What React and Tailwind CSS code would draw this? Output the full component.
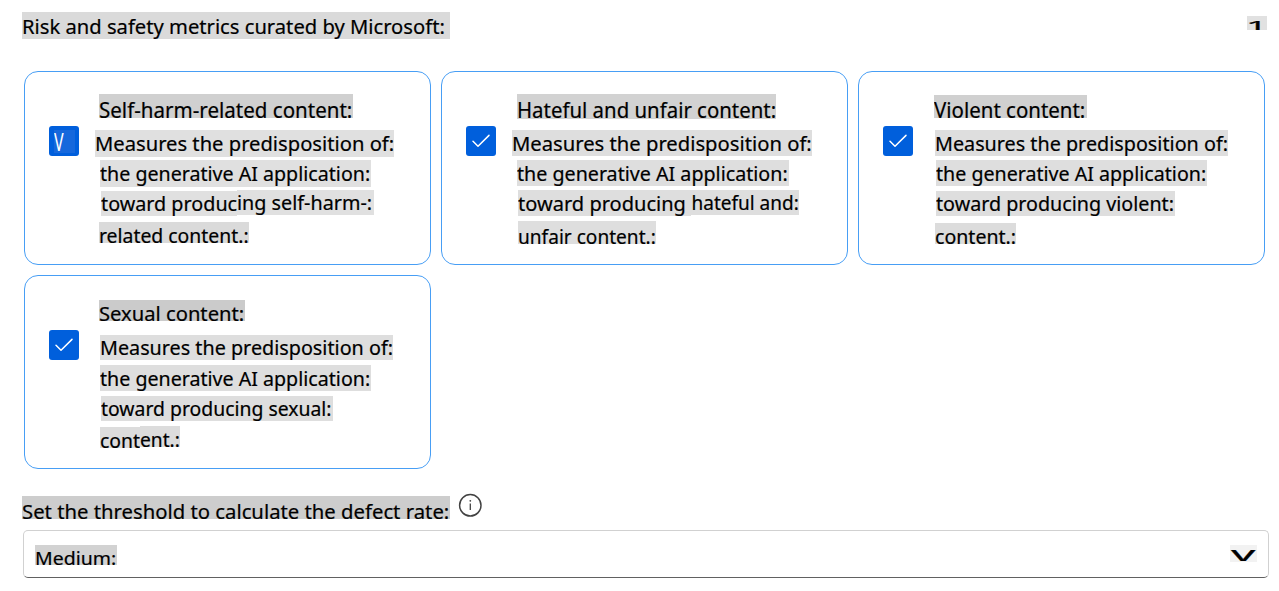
function Text({ box, type, children }) {
  return (
    <div className={`shrink-0 overflow-hidden whitespace-nowrap ${box}`}>
      <span className={`block w-max origin-left [-webkit-text-stroke:0.2px_black] ${type}`}>{children}</span>
    </div>
  );
}

function Check() {
  return (
    <svg viewBox="0 0 30 30" className="size-[30px]" fill="none" stroke="white" strokeWidth="1.5" strokeLinecap="round" strokeLinejoin="round">
      <path d="M7 15.3 12 20.2 23 9.4" />
    </svg>
  );
}

function LetterCheck() {
  return (
    <div className="mt-[4px] ml-[5px] h-[23px] w-[21px] overflow-hidden bg-[#1668dc]">
      <span className="block w-max origin-left scale-x-[0.64] text-[25px] leading-[22px] text-white">V</span>
    </div>
  );
}

const cards = [
  {
    mark: <LetterCheck />,
    lines: [
      [["Self-harm-related content:", "mt-[22px] ml-[4px] h-[24px] w-[254px] bg-[#d0d0d0]", "-ml-[0.5px] text-[21px] leading-[32px] scale-x-[0.978]"]],
      [["Measures the predisposition of:", "mt-[12px] h-[27px] w-[299px] bg-[#e0e0e0]", "scale-x-[1.062] text-[19px] leading-[29px]"]],
      [["the generative AI application:", "mt-[3px] ml-[5px] h-[27px] w-[271px] bg-[#e0e0e0]", "scale-x-[1.033] text-[19px] leading-[29px]"]],
      [
        ["toward produc", "mt-[4px] ml-[6px] h-[25px] w-[136px] bg-[#e0e0e0]", "scale-x-[1.04] text-[19px] leading-[27px]"],
        ["ing self-harm-:", "mt-[3px] h-[25px] w-[137px] bg-[#e0e0e0]", "scale-x-[1.04] text-[19px] leading-[27px]"],
      ],
      [["related content.:", "mt-[6px] ml-[4px] h-[21px] w-[150px] bg-[#dadada]", "scale-x-[1.02] text-[19px] leading-[29px]"]],
    ],
  },
  {
    mark: <Check />,
    lines: [
      [["Hateful and unfair content:", "mt-[22px] ml-[5px] h-[25px] w-[259px] bg-[#d2d2d2]", "-ml-[0.5px] text-[21px] leading-[33px] scale-x-[0.971]"]],
      [["Measures the predisposition of:", "mt-[11px] h-[26px] w-[300px] bg-[#dedede]", "scale-x-[1.064] text-[19px] leading-[28px]"]],
      [["the generative AI application:", "mt-[4px] ml-[5px] h-[26px] w-[272px] bg-[#dedede]", "scale-x-[1.035] text-[19px] leading-[28px]"]],
      [
        ["toward producing", "mt-[4px] ml-[6px] h-[26px] w-[173px] bg-[#dedede]", "scale-x-[1.055] text-[19px] leading-[28px]"],
        ["hateful and:", "mt-[4px] h-[25px] w-[108px] bg-[#dedede]", "ml-[0.5px] scale-x-[1] text-[19px] leading-[26px]"],
      ],
      [["unfair content.:", "mt-[5px] ml-[6px] h-[23px] w-[138px] bg-[#dedede]", "text-[20px] leading-[31px] scale-x-[0.955]"]],
    ],
  },
  {
    mark: <Check />,
    lines: [
      [["Violent content:", "mt-[23px] ml-[5px] h-[23px] w-[153px] bg-[#d0d0d0]", "text-[21px] leading-[30px] scale-x-[0.974]"]],
      [["Measures the predisposition of:", "mt-[12px] ml-[6px] h-[26px] w-[293px] bg-[#dedede]", "-ml-[0.5px] scale-x-[1.04] text-[19px] leading-[28px]"]],
      [["the generative AI application:", "mt-[4px] ml-[7px] h-[26px] w-[271px] bg-[#dedede]", "scale-x-[1.033] text-[19px] leading-[28px]"]],
      [["toward producing violent:", "mt-[5px] ml-[7px] h-[25px] w-[239px] bg-[#dedede]", "scale-x-[1.037] text-[19px] leading-[27px]"]],
      [["content.:", "mt-[7px] ml-[6px] h-[21px] w-[81px] bg-[#dcdcdc]", "scale-x-[1.03] text-[19px] leading-[28px]"]],
    ],
  },
  {
    mark: <Check />,
    lines: [
      [["Sexual content:", "mt-[24px] ml-[4px] h-[21px] w-[146px] bg-[#cbcbcb]", "-ml-[0.5px] text-[19.5px] leading-[27px] scale-x-[1.035]"]],
      [["Measures the predisposition of:", "mt-[14px] ml-[5px] h-[25px] w-[293px] bg-[#dedede]", "-ml-[0.5px] scale-x-[1.04] text-[19px] leading-[27px]"]],
      [["the generative AI application:", "mt-[5px] ml-[5px] h-[26px] w-[271px] bg-[#dedede]", "scale-x-[1.033] text-[19px] leading-[28px]"]],
      [["toward producing sexual:", "mt-[5px] ml-[6px] h-[25px] w-[232px] bg-[#dedede]", "scale-x-[1.02] text-[19px] leading-[27px]"]],
      [
        ["cont", "mt-[6px] ml-[5px] h-[21px] w-[40px] bg-[#dcdcdc]", "scale-x-[1.02] text-[19px] leading-[28px]"],
        ["ent.:", "mt-[5px] h-[21px] w-[40px] bg-[#dcdcdc]", "-ml-[0.5px] scale-x-[1.01] text-[19px] leading-[28px]"],
      ],
    ],
  },
];

function Card({ mark, lines }) {
  return (
    <section className="flex h-[194px] rounded-[14px] border border-[#479ef5] bg-white">
      <div className="mt-[54px] ml-[24px] size-[30px] shrink-0 overflow-hidden rounded-[3px] bg-[#005fdc]">{mark}</div>
      <div className="ml-[16px] flex flex-col">
        {lines.map((pieces, i) => (
          <div key={i} className="flex items-start">
            {pieces.map(([text, box, type]) => (
              <Text key={text} box={box} type={type}>{text}</Text>
            ))}
          </div>
        ))}
      </div>
    </section>
  );
}

export default function App() {
  return (
    <main className="flex h-[591px] w-[1279px] flex-col overflow-hidden bg-white font-['Noto_Sans',sans-serif] text-black">
      <header className="flex h-[71px] shrink-0 items-start justify-between pr-[12px] pl-[22px]">
        <Text box="mt-[12px] h-[27px] w-[428px] bg-[#dadada]" type="-ml-[0.5px] text-[20px] leading-[30px] scale-x-[1.009]">
          Risk and safety metrics curated by Microsoft:
        </Text>
        <Text box="mt-[16px] h-[14px] w-[20px] bg-[#e1e1e1]" type="-ml-px text-[15px] leading-[18px] scale-x-[2.5]">1</Text>
      </header>

      <div className="ml-[24px] grid w-[1241px] shrink-0 grid-cols-3 gap-[10px]">
        {cards.map((card, i) => (
          <Card key={i} {...card} />
        ))}
      </div>

      <div className="mt-[24px] ml-[22px] flex h-[37px] shrink-0 items-start">
        <Text box="mt-[3px] h-[23px] w-[428px] bg-[#cdcdcd]" type="-ml-[0.5px] text-[20.5px] leading-[30px] scale-x-[0.989]">
          Set the threshold to calculate the defect rate:
        </Text>
        <svg viewBox="0 0 24 24" className="ml-[8px] size-[24px]" fill="none" stroke="#424242" strokeWidth="1.5">
          <circle cx="12.3" cy="12.3" r="10.7" />
          <path d="M12.3 10.5v6.5" strokeWidth="1.3" />
          <circle cx="12.3" cy="7.8" r="0.9" fill="#424242" stroke="none" />
        </svg>
      </div>

      <div className="ml-[23px] flex h-[48px] w-[1246px] shrink-0 items-start justify-between rounded-[5px] border border-[#d1d1d1] border-b-[#616161] pr-[11px] pl-[11px]">
        <Text box="mt-[14px] h-[20px] w-[82px] bg-[#d2d2d2]" type="text-[18.5px] leading-[26px] -ml-[0.5px] scale-x-[1.055]">Medium:</Text>
        <Text box="mt-[14px] h-[17px] w-[27px] bg-[#f2f2f2]" type="ml-[0.5px] text-[20px] leading-[17px] scale-x-[2.4]">v</Text>
      </div>
    </main>
  );
}
